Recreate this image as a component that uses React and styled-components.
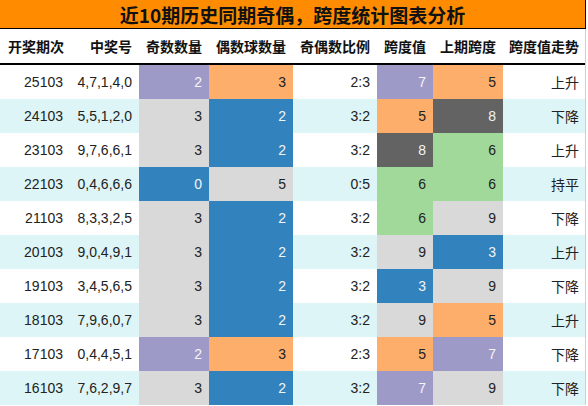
import React from 'react';
import styled, { createGlobalStyle } from 'styled-components';

const GlobalStyle = createGlobalStyle`
    html, body {
        margin: 0;
        padding: 0;
        background: #fff;
    }
    body {
        font-family: "Liberation Sans", "Noto Sans CJK SC", Arial, sans-serif;
        color: #222;
    }
`;

const palette = {
    purple: { bg: '#9e9ac8', fg: '#f4f4f4' },
    orange: { bg: '#fdae6b', fg: '#222' },
    blue: { bg: '#3182bd', fg: '#f4f4f4' },
    gray: { bg: '#d9d9d9', fg: '#222' },
    dark: { bg: '#636363', fg: '#f4f4f4' },
    green: { bg: '#a1d99b', fg: '#222' },
};

const headers = ['开奖期次', '中奖号', '奇数数量', '偶数球数量', '奇偶数比例', '跨度值', '上期跨度', '跨度值走势'];

// [期次, 号码, 奇数, 奇色, 偶数, 偶色, 比例, 跨度, 跨度色, 上期, 上期色, 走势]
const rows = [
    ['25103', '4,7,1,4,0', 2, 'purple', 3, 'orange', '2:3', 7, 'purple', 5, 'orange', '上升'],
    ['24103', '5,5,1,2,0', 3, 'gray', 2, 'blue', '3:2', 5, 'orange', 8, 'dark', '下降'],
    ['23103', '9,7,6,6,1', 3, 'gray', 2, 'blue', '3:2', 8, 'dark', 6, 'green', '上升'],
    ['22103', '0,4,6,6,6', 0, 'blue', 5, 'gray', '0:5', 6, 'green', 6, 'green', '持平'],
    ['21103', '8,3,3,2,5', 3, 'gray', 2, 'blue', '3:2', 6, 'green', 9, 'gray', '下降'],
    ['20103', '9,0,4,9,1', 3, 'gray', 2, 'blue', '3:2', 9, 'gray', 3, 'blue', '上升'],
    ['19103', '3,4,5,6,5', 3, 'gray', 2, 'blue', '3:2', 3, 'blue', 9, 'gray', '下降'],
    ['18103', '7,9,6,0,7', 3, 'gray', 2, 'blue', '3:2', 9, 'gray', 5, 'orange', '上升'],
    ['17103', '0,4,4,5,1', 2, 'purple', 3, 'orange', '2:3', 5, 'orange', 7, 'purple', '下降'],
    ['16103', '7,6,2,9,7', 3, 'gray', 2, 'blue', '3:2', 7, 'purple', 9, 'gray', '下降'],
];

const Page = styled.div`
    width: 586px;
`;

const TitleBar = styled.div`
    height: 28px;
    background: #ff8c00;
    border-right: 1px solid #000;
    border-bottom: 1px solid #000;
    display: flex;
    align-items: center;
    justify-content: center;
    font-family: "Noto Sans CJK SC", "Liberation Sans", sans-serif;
    font-size: 19px;
    font-weight: 700;
    color: #111;
`;

const Table = styled.div`
    width: 585px;
    border-right: 1px solid #cfcfcf;
`;

const Row = styled.div`
    display: grid;
    grid-template-columns: 68px 71px 70px 84px 84px 56px 70px 82px;
    height: 34px;
    background: ${p => (p.$striped ? '#ddf5f7' : '#fff')};
`;

const HeadRow = styled(Row)`
    border-bottom: 2px solid #000;
`;

const HeadCell = styled.div`
    display: flex;
    align-items: center;
    justify-content: flex-end;
    padding-right: ${p => p.$pad || 7}px;
    font-family: "Noto Sans CJK SC", "Liberation Sans", sans-serif;
    font-size: 14px;
    font-weight: 700;
    color: #111;
    white-space: nowrap;
`;

const Cell = styled.div`
    display: flex;
    align-items: center;
    justify-content: flex-end;
    padding-right: ${p => p.$pad || 7}px;
    font-size: 14px;
    white-space: nowrap;
    background: ${p => (p.$tone ? palette[p.$tone].bg : 'transparent')};
    color: ${p => (p.$tone ? palette[p.$tone].fg : '#222')};
`;

const Trend = styled(Cell)`
    font-family: "Noto Sans CJK SC", "Liberation Sans", sans-serif;
`;

export default function App() {
    return (
        <Page>
            <GlobalStyle />
            <TitleBar>近10期历史同期奇偶，跨度统计图表分析</TitleBar>
            <Table>
                <HeadRow>
                    {headers.map((h, i) => (
                        <HeadCell key={h} $pad={i === 0 ? 4 : i === 7 ? 6 : 7}>{h}</HeadCell>
                    ))}
                </HeadRow>
                {rows.map((r, i) => (
                    <Row key={r[0]} $striped={i % 2 === 1}>
                        <Cell $pad={5}>{r[0]}</Cell>
                        <Cell>{r[1]}</Cell>
                        <Cell $tone={r[3]}>{r[2]}</Cell>
                        <Cell $tone={r[5]}>{r[4]}</Cell>
                        <Cell>{r[6]}</Cell>
                        <Cell $tone={r[8]}>{r[7]}</Cell>
                        <Cell $tone={r[10]}>{r[9]}</Cell>
                        <Trend $pad={6}>{r[11]}</Trend>
                    </Row>
                ))}
            </Table>
        </Page>
    );
}
